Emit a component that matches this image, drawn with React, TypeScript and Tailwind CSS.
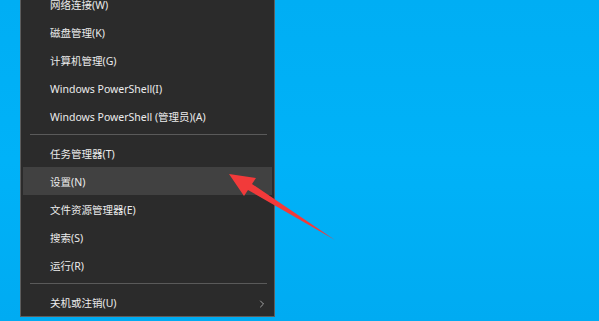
import { ChevronRight } from "lucide-react";

type Item = { label: string; active?: boolean; sub?: boolean };

const groups: Item[][] = [
  [
    { label: "网络连接(W)" },
    { label: "磁盘管理(K)" },
    { label: "计算机管理(G)" },
    { label: "Windows PowerShell(I)" },
    { label: "Windows PowerShell (管理员)(A)" },
  ],
  [
    { label: "任务管理器(T)" },
    { label: "设置(N)", active: true },
    { label: "文件资源管理器(E)" },
    { label: "搜索(S)" },
    { label: "运行(R)" },
  ],
  [{ label: "关机或注销(U)", sub: true }],
];

function MenuRow({ label, active, sub }: Item) {
  return (
    <div
      className={`mx-[2px] h-[28px] flex items-center justify-between pl-[27px] pr-[4px] pt-[3px] ${
        active ? "bg-[#414141]" : ""
      }`}
    >
      <span className="text-[10.5px] text-[#ececec] whitespace-nowrap">{label}</span>
      {sub && <ChevronRight className="h-[12px] w-[12px] text-[#c8c8c8]" strokeWidth={1.5} />}
    </div>
  );
}

export default function App() {
  return (
    <div
      className="relative w-[599px] h-[321px] overflow-hidden bg-linear-to-b from-[#00aef4] via-[#00b2f8] to-[#00abf2] pl-[20px]"
      style={{ fontFamily: '"Noto Sans", "Noto Sans CJK SC", sans-serif' }}
    >
      <div className="mt-[-11px] w-[255px] border border-[#5e5e5e] bg-[#2b2b2b]">
        {groups.map((g, gi) => (
          <div key={gi}>
            {gi > 0 && (
              <div className="h-[9px] flex items-center pl-[9px] pr-[7px]">
                <div className="h-px w-full bg-[#5a5a5a]" />
              </div>
            )}
            {g.map((item) => (
              <MenuRow key={item.label} {...item} />
            ))}
          </div>
        ))}
      </div>

      {/* red pointer arrow */}
      <svg className="absolute left-0 top-0" width="599" height="321" viewBox="0 0 599 321">
        <polygon
          points="229,174 256,178 252,184 335,240 248,190 244,196"
          fill="#f23a3a"
        />
      </svg>
    </div>
  );
}
